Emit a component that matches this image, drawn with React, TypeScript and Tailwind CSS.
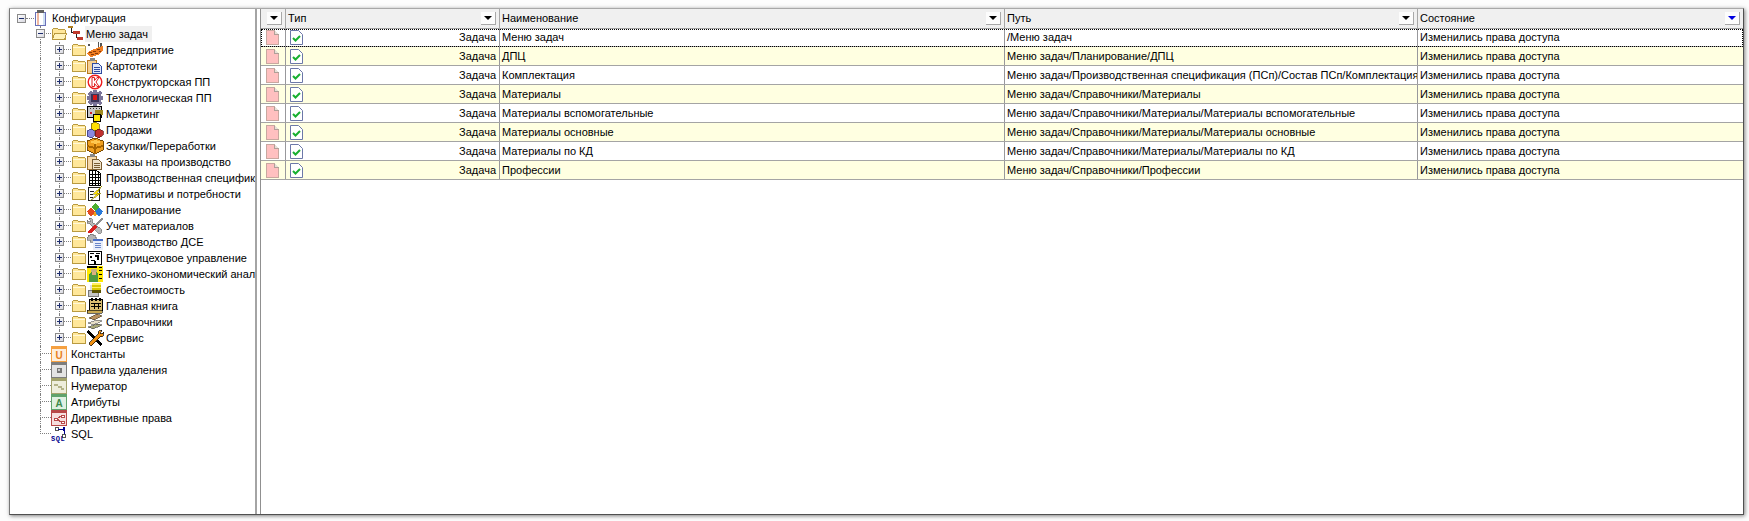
import type { ReactNode } from "react";

const rows = [
  { name: "Меню задач", path: "/Меню задач" },
  { name: "ДПЦ", path: "Меню задач/Планирование/ДПЦ" },
  { name: "Комплектация", path: "Меню задач/Производственная спецификация (ПСп)/Состав ПСп/Комплектация" },
  { name: "Материалы", path: "Меню задач/Справочники/Материалы" },
  { name: "Материалы вспомогательные", path: "Меню задач/Справочники/Материалы/Материалы вспомогательные" },
  { name: "Материалы основные", path: "Меню задач/Справочники/Материалы/Материалы основные" },
  { name: "Материалы по КД", path: "Меню задач/Справочники/Материалы/Материалы по КД" },
  { name: "Профессии", path: "Меню задач/Справочники/Профессии" },
];

function Px({ children, w = 16, h = 16 }: { children: ReactNode; w?: number; h?: number }) {
  return (
    <svg width={w} height={h} viewBox={`0 0 ${w} ${h}`} className="shrink-0 overflow-visible" shapeRendering="crispEdges">
      {children}
    </svg>
  );
}

const taskIcons: Record<string, ReactNode> = {
  enterprise: (
    <>
      <path d="M11 0h1v6h-1zM13 1h2v5h-2z" fill="#555" />
      <path d="M1 2l2 2M3 2L1 4" stroke="#555" fill="none" />
      <path d="M0 11l5-3 5-2 5-2 1 1v4l-5 4-7 2-3-2z" fill="#ef7d22" />
      <path d="M2 10h3v1H2zM6 9h3v1H6zM10 7h3v1h-3zM4 12h3v1H4zM8 11h3v1H8zM12 9h2v1h-2z" fill="#8a3a08" />
    </>
  ),
  cards: (
    <>
      <path d="M.5 2.500h9v13h-9z" fill="#f6cf90" stroke="#b87820" />
      <path d="M3 0h5v3H3z" fill="#888" />
      <path d="M5.500 5.500h6l3 3v7h-9z" fill="#dfe6f8" stroke="#2f4aa0" />
      <path d="M7 9h6v1H7zM7 11h6v1H7zM7 13h6v1H7z" fill="#2f4aa0" />
    </>
  ),
  design: (
    <>
      <circle cx="8" cy="8" r="6.8" fill="#fff" stroke="#ee1c1c" strokeWidth="1.4" shapeRendering="auto" />
      <path d="M5 3.500h2.500v3L10 3.500h2L9 8l3 4.500h-2L7.500 9.500v3H5z" fill="#fff" stroke="#e02020" strokeWidth="1" shapeRendering="auto" />
    </>
  ),
  tech: (
    <>
      <path d="M6 0h4v2l3-1 2 2-1 3h2v4h-2l1 3-2 2-3-1v2H6v-2l-3 1-2-2 1-3H0V6h2L1 3l2-2 3 1z" fill="#7a7498" />
      <path d="M4 4h8v8H4z" fill="#3a3458" />
      <path d="M6 5h4v5H6z" fill="#d81818" />
    </>
  ),
  marketing: (
    <>
      <path d="M.5 .500h14v11H.5z" fill="#c8c8c8" stroke="#000" />
      <path d="M3 2h1v1H3zM6 2h1v1H6zM9 2h1v1H9zM12 2h1v1h-1z" fill="#333" />
      <path d="M3 6h2v2H3z" fill="#d02020" />
      <path d="M8 4h8v5H8z" fill="#a08a20" />
      <path d="M6.500 8.500h7v7h-7z" fill="#ffe800" stroke="#000" />
    </>
  ),
  sales: (
    <>
      <path d="M8 0l4 2v5l-4 2-4-2V2z" fill="#ffe000" stroke="#6a5a00" strokeWidth=".7" />
      <path d="M4 7l3 2v5l-3 2-4-2V9z" fill="#8a8ae0" stroke="#2c2c70" strokeWidth=".7" />
      <path d="M12 7l4 2v4l-4 3-4-2V9z" fill="#c03030" stroke="#601010" strokeWidth=".7" />
    </>
  ),
  purchase: (
    <>
      <path d="M0 3l8-3 8 3v9l-8 4-8-4z" fill="#f0a020" stroke="#7a4a00" />
      <path d="M7 1h2v15H7zM0 7l8 2 8-2v2l-8 2-8-2z" fill="#a86400" />
      <path d="M2 4l6 2 6-2-6-2z" fill="#ffc850" />
    </>
  ),
  orders: (
    <>
      <path d="M.5 2.500h9v13h-9z" fill="#f6d8a8" stroke="#9a7030" />
      <path d="M3 0h5v3H3z" fill="#888" />
      <path d="M5.500 5.500h6l3 3v7h-9z" fill="#efe2c8" stroke="#7a5c30" />
      <path d="M7 9h6v1H7zM7 11h6v1H7zM7 13h6v1H7z" fill="#7a5c30" />
    </>
  ),
  spec: (
    <>
      <path d="M2.500 .500h7l4 3v12h-11z" fill="#fff" stroke="#000" />
      <path d="M3 4h10M3 7h10M3 10h10M3 13h10M5 1v14M8 1v14M11 3v12" stroke="#000" fill="none" />
    </>
  ),
  norms: (
    <>
      <path d="M1.500 1.500h11v13h-11z" fill="#fff" stroke="#222" />
      <path d="M3 5h4v1H3zM3 8h3v1H3zM3 11h3v1H3z" fill="#222" />
      <path d="M15 0L6 8h4l-7 7 11-8h-4z" fill="#ffe000" stroke="#7a7000" strokeWidth=".5" />
    </>
  ),
  planning: (
    <>
      <path d="M8 1l4 4-4 4-4-4z" fill="#4caf30" />
      <path d="M4 5l4 4.500L4 15l-4-5.500z" fill="#e24a20" />
      <path d="M12 5l4 4.500L12 15l-4-5.500z" fill="#2b7ad8" />
      <path d="M8 9.500l2 3L8 15l-2-2.500z" fill="#f0a020" />
    </>
  ),
  materials: (
    <>
      <path d="M2 0l3 1v3l10 8-1 3h-3L3 6 0 5V2l2 2 2-1z" fill="#b8b8b8" stroke="#6a6a6a" strokeWidth=".7" />
      <path d="M15 0l1 1-6 7-2-2z" fill="#8e8e8e" />
      <path d="M8 7l2 2-6 6H1v-2z" fill="#d82020" />
    </>
  ),
  dse: (
    <>
      <path d="M3 0h3v1h2v2h1v3H7v2H3V6H0V3h1V1h2z" fill="#b4b4b4" stroke="#666" strokeWidth=".6" />
      <path d="M6 5h10v11H6z" fill="#e8eefa" />
      <path d="M6 5h10v2H6z" fill="#4a70c8" />
      <path d="M8 9h6v1H8zM8 11h6v1H8zM8 13h6v1H8z" fill="#6a86c8" />
    </>
  ),
  shop: (
    <>
      <path d="M1.500 1.500h13v13h-13z" fill="#fff" stroke="#000" />
      <path d="M3 3h4v1H3zM9 3h4v1H9zM3 6h2v2H3zM8 5h4v2H8zM10 7h2v3h-2zM4 10h4v1H4zM7 11h2v3H7z" fill="#000" />
    </>
  ),
  economy: (
    <>
      <path d="M0 0h16v16H0z" fill="#ffe800" />
      <path d="M0 0h10v2H0zM12 1h3v1h-3zM12 4h3v1h-3zM12 8h3v1h-3zM12 12h3v1h-3z" fill="#000" />
      <path d="M4 3h6v3H4z" fill="#c8b080" />
      <path d="M2 8l3-2h4l2 2v8H2z" fill="#4f9a40" />
      <path d="M5 6h4v3H5z" fill="#e0b080" />
    </>
  ),
  cost: (
    <>
      <path d="M1.500 8.500h10v6h-10z" fill="#c4c4c4" stroke="#777" />
      <path d="M5 2h9v8H5z" fill="#d8c800" />
      <path d="M5 1h9v2H5zM5 5h9v1H5z" fill="#fff060" />
      <path d="M5 8h9v3H5z" fill="#5a5200" />
      <path d="M3 3h2v5H3z" fill="#ddd" />
    </>
  ),
  ledger: (
    <>
      <path d="M2.500 1.500h13v11h-13z" fill="#d8bc70" stroke="#000" />
      <path d="M4 0h2v3H4zM8 0h2v3H8zM12 0h2v3h-2z" fill="#000" />
      <path d="M4 5h10v1H4zM4 8h10v1H4zM7 5h1v6H7zM11 5h1v6h-1z" fill="#000" />
      <path d="M0 12h15v3H0z" fill="#c8a850" stroke="#000" strokeWidth=".6" />
    </>
  ),
  refs: (
    <>
      <path d="M2 4l8-4 5 2-8 4z" fill="#b89060" stroke="#4a3a20" strokeWidth=".6" />
      <path d="M1 9l9-3 5 1-9 4z" fill="#e8e0c8" stroke="#555" strokeWidth=".6" />
      <path d="M1 13l9-3 5 1-9 4z" fill="#a8a878" stroke="#444" strokeWidth=".6" />
    </>
  ),
  service: (
    <>
      <path d="M1 0l3 3 11 11-2 2L2 5 0 2z" fill="#000" />
      <path d="M15 0l-3 1-1 3-9 9 2 3 9-9 3-1 1-4-3 2-1-1z" fill="#f09010" stroke="#000" strokeWidth=".7" />
    </>
  ),
};

function Square({ edge, fill, children }: { edge: string; fill: string; children: ReactNode }) {
  return (
    <Px>
      <rect x=".5" y=".5" width="15" height="15" fill={fill} stroke={edge} />
      <rect x="1" y="1" width="14" height="2" fill={edge} />
      {children}
    </Px>
  );
}

const leafIcons: Record<string, ReactNode> = {
  constants: (
    <Square edge="#f5a040" fill="#fdeedd">
      <text x="8" y="13" textAnchor="middle" fontSize="10" fontWeight="700" fill="#e8801c" fontFamily="Liberation Sans, sans-serif">U</text>
    </Square>
  ),
  rules: (
    <Square edge="#7d7d7d" fill="#e4e4e4">
      <path d="M6 6h5v5H6z" fill="#777" />
      <path d="M7 7h2v2H7z" fill="#ccc" />
    </Square>
  ),
  numerator: (
    <Square edge="#a3a36c" fill="#eeeedc">
      <path d="M3 6h4v2H3zM7 8h4v2H7zM10 10h3v2h-3z" fill="#b4b488" />
    </Square>
  ),
  attrs: (
    <Square edge="#5fa36c" fill="#dff0e2">
      <text x="8" y="13" textAnchor="middle" fontSize="10" fontWeight="700" fill="#3d8a4c" fontFamily="Liberation Sans, sans-serif">A</text>
    </Square>
  ),
  directive: (
    <Square edge="#b84848" fill="#f6dede">
      <path d="M3 8h3v2H3zM10 5h3v2h-3zM10 11h3v2h-3z" fill="#fff" stroke="#b84848" />
      <path d="M6 9l4-3M6 9l4 3" stroke="#b84848" fill="none" />
    </Square>
  ),
  sql: (
    <Px>
      <path d="M4.500 1.500h3v3h-3z" fill="#fff" stroke="#555" />
      <path d="M7 3h6" stroke="#00008c" fill="none" />
      <path d="M12 1h2v4h-2z" fill="#00008c" />
      <path d="M13 5v3" stroke="#00008c" fill="none" />
      <path d="M11.500 8.500h3v3h-3z" fill="#fff" stroke="#555" />
      <text x="0" y="15" fontSize="7" fontWeight="700" letterSpacing=".6" fill="#00008c" fontFamily="Liberation Mono, monospace">SQL</text>
    </Px>
  ),
};

function Folder({ open }: { open?: boolean }) {
  return (
    <Px>
      <path d="M1.500 3.500l1-1h4l1 1h6l1 1v9h-13z" fill="#ffe79a" stroke="#b99a40" />
      {open ? (
        <path d="M1.500 13.500l2-6h12l-2 6z" fill="#fff3bc" stroke="#b99a40" />
      ) : (
        <path d="M2 5h12v1H2z" fill="#fff8d8" />
      )}
    </Px>
  );
}

function ConfigIcon() {
  return (
    <Px>
      <path d="M1.500 2.500h10v13h-10z" fill="#fff" stroke="#6a70b8" />
      <path d="M3 3h2v12H3z" fill="#f0b8a0" />
      <path d="M9 3h2v12H9z" fill="#cfe0f4" />
      <path d="M3 0h7v3H3z" fill="#606060" />
    </Px>
  );
}

function MenuIcon() {
  return (
    <Px>
      <path d="M1 0h5v2H1z" fill="#b08020" />
      <path d="M4 2v4h3M9 8v3h3" stroke="#222" fill="none" />
      <path d="M6 5h7v3H6z" fill="#c0392b" />
      <path d="M10 11h6v3h-6z" fill="#c0392b" />
    </Px>
  );
}

function Expander({ open, className }: { open?: boolean; className: string }) {
  return (
    <span className={`flex size-[9px] items-center justify-center border border-[#8a8a8a] bg-linear-to-br from-white to-[#d8d8e0] ${className}`}>
      <span className="relative block h-px w-[5px] bg-[#1c2c6c]">
        {!open && <span className="absolute top-[-2px] left-[2px] block h-[5px] w-px bg-[#1c2c6c]" />}
      </span>
    </span>
  );
}

// dotted tree connector: vertical line + horizontal stub to the row's icon
function Branch({ w, last, children }: { w: string; last?: boolean; children?: ReactNode }) {
  return (
    <span className={`relative flex h-4 shrink-0 flex-col ${w}`}>
      <span className="h-2 border-b border-l border-dotted border-[#808080]" />
      <span className={`h-2 ${last ? "" : "border-l border-dotted border-[#808080]"}`} />
      {children}
    </span>
  );
}

function Guide() {
  return <span className="h-4 w-[19px] shrink-0 border-l border-dotted border-[#808080]" />;
}

const tasks = [
  ["enterprise", "Предприятие"],
  ["cards", "Картотеки"],
  ["design", "Конструкторская ПП"],
  ["tech", "Технологическая ПП"],
  ["marketing", "Маркетинг"],
  ["sales", "Продажи"],
  ["purchase", "Закупки/Переработки"],
  ["orders", "Заказы на производство"],
  ["spec", "Производственная спецификация"],
  ["norms", "Нормативы и потребности"],
  ["planning", "Планирование"],
  ["materials", "Учет материалов"],
  ["dse", "Производство ДСЕ"],
  ["shop", "Внутрицеховое управление"],
  ["economy", "Технико-экономический анализ"],
  ["cost", "Себестоимость"],
  ["ledger", "Главная книга"],
  ["refs", "Справочники"],
  ["service", "Сервис"],
];

const leaves = [
  ["constants", "Константы"],
  ["rules", "Правила удаления"],
  ["numerator", "Нумератор"],
  ["attrs", "Атрибуты"],
  ["directive", "Директивные права"],
  ["sql", "SQL"],
];

function Tree() {
  return (
    <div className="h-full w-[247px] shrink-0 overflow-hidden border-r-2 border-[#a4a4a4] bg-white pt-px whitespace-nowrap">
      <div className="flex h-4 items-center pl-[7px]">
        <Expander open className="shrink-0" />
        <span className="h-0 w-2 shrink-0 border-t border-dotted border-[#808080]" />
        <ConfigIcon />
        <span className="ml-0.5">Конфигурация</span>
      </div>
      <div className="ml-[30px]">
        <div className="flex h-4 items-center">
          <Branch w="w-[11px]">
            <Expander open className="absolute top-[3px] -left-1" />
          </Branch>
          <Folder open />
          <MenuIcon />
          <span className="ml-0.5 bg-[#f0f0f0] pr-1 pl-px leading-4">Меню задач</span>
        </div>
        {tasks.map(([icon, label], i) => (
          <div key={icon} className="flex h-4 items-center">
            <Guide />
            <Branch w="w-[12px]" last={i === tasks.length - 1}>
              <Expander className="absolute top-[3px] -left-1" />
            </Branch>
            <Folder />
            <Px>{taskIcons[icon]}</Px>
            <span className="ml-[3px]">{label}</span>
          </div>
        ))}
        {leaves.map(([icon, label], i) => (
          <div key={icon} className="flex h-4 items-center">
            <Branch w="w-[11px]" last={i === leaves.length - 1} />
            {leafIcons[icon]}
            <span className="ml-1">{label}</span>
          </div>
        ))}
      </div>
    </div>
  );
}

function HeadButton({ active }: { active?: boolean }) {
  return (
    <span className="flex h-[13px] w-[15px] shrink-0 items-center justify-center border-r border-b border-[#a8a8a8] bg-[#fcfcfc]">
      <span className={`h-0 w-0 border-x-4 border-t-4 border-x-transparent ${active ? "border-t-[#0000e0]" : "border-t-black"}`} />
    </span>
  );
}

const gridCols = "grid grid-cols-[24px_214px_505px_413px_1fr]";

function Grid() {
  return (
    <div className="min-w-0 flex-1 border-l border-[#909090] bg-white whitespace-nowrap">
      <div className={`${gridCols} h-5 border-b border-[#a0a0a0] bg-[#f0f0f0]`}>
        <div className="flex items-center justify-end pr-[3px]">
          <HeadButton />
        </div>
        {["Тип", "Наименование", "Путь", "Состояние"].map((title, i) => (
          <div key={title} className="flex items-center justify-between border-l border-[#a8a8a8] pr-[3px] pl-0.5">
            <span>{title}</span>
            <HeadButton active={i === 3} />
          </div>
        ))}
      </div>
      {rows.map((row, i) => (
        <div
          key={row.name}
          className={`${gridCols} border-b border-[#a4a4a4] ${i === 0 ? "h-[18px] outline-1 -outline-offset-1 outline-black outline-dotted" : "h-[19px]"} ${i % 2 ? "bg-[#ffffe1]" : "bg-white"}`}
        >
          <div className="flex items-center pl-[5px]">
            <svg width="13" height="15" viewBox="0 0 13 15" shapeRendering="crispEdges">
              <path d="M.5.500h8l4 4v10H.5z" fill="#ffc0c0" stroke="#c8a8a0" />
              <path d="M8.500.500v4h4" fill="#e8e0d8" stroke="#b0a098" />
            </svg>
          </div>
          <div className="flex items-center border-l border-[#98989c] pl-[4px]">
            <svg width="13" height="15" viewBox="0 0 13 15" className="shrink-0">
              <path d="M.5.500h8l4 4v10H.5z" fill="#fff" stroke="#6c78a8" />
              <path d="M3 8l2.500 2.500L10 6" fill="none" stroke="#18b030" strokeWidth="2" />
            </svg>
            <span className="mr-[3px] flex-1 text-right">Задача</span>
          </div>
          <div className="flex items-center border-l border-[#98989c] pl-0.5">{row.name}</div>
          <div className="flex items-center overflow-hidden border-l border-[#98989c] pl-0.5">{row.path}</div>
          <div className="flex items-center border-l border-[#98989c] pl-0.5">Изменились права доступа</div>
        </div>
      ))}
    </div>
  );
}

export default function App() {
  return (
    <div className="h-[521px] bg-[#fdfdfd] pt-2 pr-[5px] pb-1.5 pl-[9px] text-[11px] leading-none text-black [font-family:'Liberation_Sans',sans-serif]">
      <div className="flex h-full border border-t-[#a8a8a8] border-r-[#505050] border-b-[#505050] border-l-[#787878] bg-white shadow-[1px_1px_4px_rgba(0,0,0,0.5)]">
        <Tree />
        <div className="w-[3px] shrink-0" />
        <Grid />
      </div>
    </div>
  );
}
